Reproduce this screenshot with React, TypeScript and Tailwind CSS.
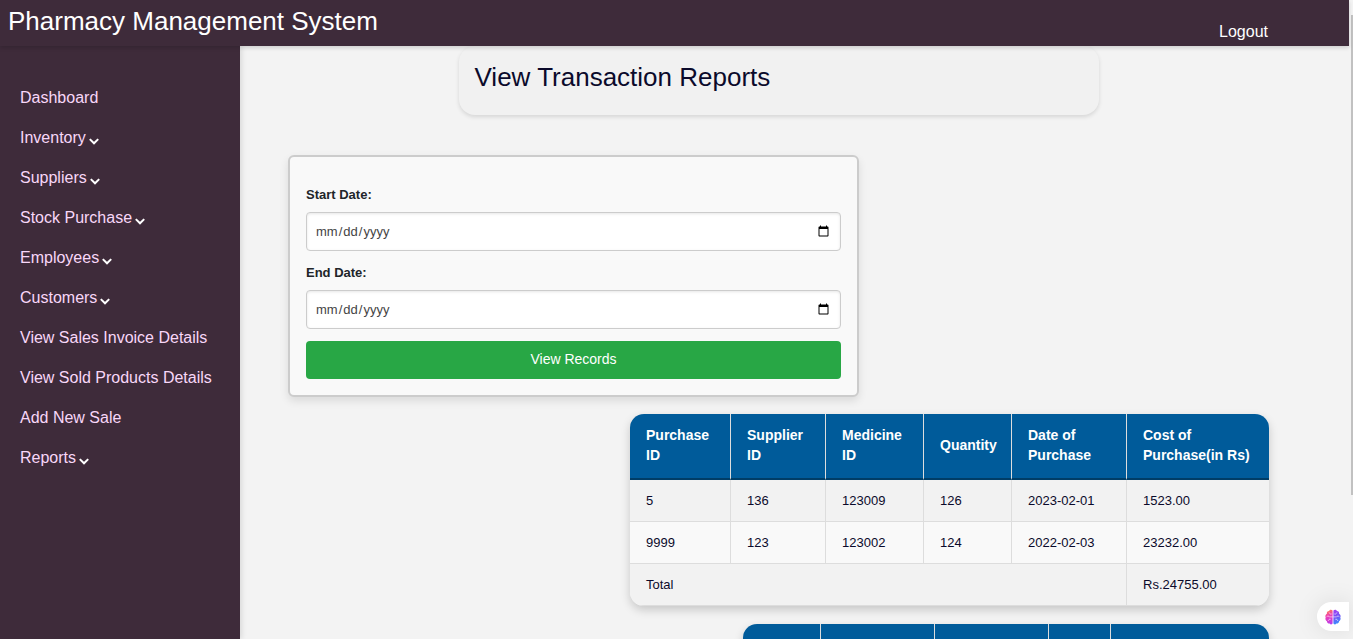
import React from "react";

type NavEntry = { label: string; expandable?: boolean };

const NAV: NavEntry[] = [
  { label: "Dashboard" },
  { label: "Inventory", expandable: true },
  { label: "Suppliers", expandable: true },
  { label: "Stock Purchase", expandable: true },
  { label: "Employees", expandable: true },
  { label: "Customers", expandable: true },
  { label: "View Sales Invoice Details" },
  { label: "View Sold Products Details" },
  { label: "Add New Sale" },
  { label: "Reports", expandable: true },
];

const COLUMNS = [
  { title: "Purchase ID", width: "w-[101px]" },
  { title: "Supplier ID", width: "w-[95px]" },
  { title: "Medicine ID", width: "w-[98px]" },
  { title: "Quantity", width: "w-[88px]" },
  { title: "Date of Purchase", width: "w-[115px]" },
  { title: "Cost of Purchase(in Rs)", width: "w-[142px]" },
];

const ROWS = [
  ["5", "136", "123009", "126", "2023-02-01", "1523.00"],
  ["9999", "123", "123002", "124", "2022-02-03", "23232.00"],
];

const SECOND_TABLE_COLUMNS = ["w-[78px]", "w-[114px]", "w-[114px]", "w-[62px]", "w-[158px]"];

const TH =
  "border-b-2 border-b-[#003d66] border-r border-r-[#dddddd] px-4 pt-[11px] pb-[13px] text-left align-middle font-bold last:border-r-0";
const TD = "border-r border-b border-[#dddddd] px-4 pt-[11px] pb-[10px] last:border-r-0";

function Chevron() {
  return (
    <svg className="mt-1.5 ml-[3px] h-[7px] w-[10px]" viewBox="0 0 10 7" fill="none" aria-hidden="true">
      <path d="M0.8 1.1 L5 5.3 L9.2 1.1" stroke="#ffffff" strokeWidth="2" />
    </svg>
  );
}

function BrainIcon() {
  return (
    <svg className="h-4 w-4" viewBox="0 0 16 16" fill="none" aria-hidden="true">
      <defs>
        <linearGradient id="brainLeft" x1="1" y1="1" x2="7" y2="15" gradientUnits="userSpaceOnUse">
          <stop offset="0" stopColor="#ff8a3c" />
          <stop offset="0.4" stopColor="#ee3fb4" />
          <stop offset="1" stopColor="#b63df0" />
        </linearGradient>
        <linearGradient id="brainRight" x1="9" y1="1" x2="15" y2="15" gradientUnits="userSpaceOnUse">
          <stop offset="0" stopColor="#a63df2" />
          <stop offset="0.5" stopColor="#7256f5" />
          <stop offset="1" stopColor="#2e9bff" />
        </linearGradient>
      </defs>
      <path
        d="M7.6 1.6C6.6 .3 4.6 .6 4.1 2 2.6 2 1.5 3.4 1.9 4.8.4 5.6 0 7.4.7 8.6 0 10 .5 11.6 1.9 12.2c.1 1.5 1.4 2.5 2.7 2.3.8 1.2 2.4 1.2 3 .1Z"
        fill="url(#brainLeft)"
      />
      <path
        d="M8.4 1.6c1-1.3 3-1 3.5.4 1.5 0 2.6 1.4 2.2 2.8 1.5.8 1.9 2.6 1.2 3.8.7 1.4.2 3-1.2 3.6-.1 1.5-1.4 2.5-2.7 2.3-.8 1.2-2.4 1.2-3 .1Z"
        fill="url(#brainRight)"
      />
      <path
        d="M4.3 3.9c.3 1 1.2 1.4 2 1.2M2 7.4c1-.6 2-.3 2.4.5h3M3.3 11.6c.1-1 1-1.6 2-1.4M11.7 3.9c-.3 1-1.2 1.4-2 1.2M14 7.4c-1-.6-2-.3-2.4.5h-3M12.7 11.6c-.1-1-1-1.6-2-1.4"
        stroke="#ffffff"
        strokeOpacity="0.75"
        strokeWidth="0.8"
        strokeLinecap="round"
      />
    </svg>
  );
}

function DateField({ id, label }: { id: string; label: string }) {
  return (
    <div className="mb-3">
      <label htmlFor={id} className="mb-[7px] block text-[13px] leading-5 font-bold text-[#212529]">
        {label}
      </label>
      <input
        id={id}
        type="date"
        className="block h-[39px] w-full rounded-[4px] border border-[#cccccc] bg-white px-2 text-[13px] text-[#444444] shadow-[inset_0_1px_3px_rgba(0,0,0,0.1)]"
      />
    </div>
  );
}

export default function App() {
  return (
    <div className="flex h-screen overflow-hidden bg-[#f3f3f3] font-['Liberation_Sans',Arial,sans-serif] text-[#0b0a2b]">
      <div className="relative flex min-w-0 flex-1 flex-col">
        <header className="z-20 flex h-[46px] shrink-0 justify-between bg-[#3e2b3a] pr-[81px] pl-2 text-white shadow-[0_2px_4px_rgba(0,0,0,0.15)]">
          <h1 className="pt-1 text-[26px] leading-[34px]">Pharmacy Management System</h1>
          <a href="#logout" className="pt-5 text-base leading-6">
            Logout
          </a>
        </header>

        <div className="flex min-h-0 flex-1">
          <nav className="z-10 w-60 shrink-0 bg-[#3e2b3a] pt-8 shadow-[2px_0_5px_rgba(0,0,0,0.1)]">
            <ul>
              {NAV.map((item) => (
                <li key={item.label}>
                  <a href="#" className="flex h-10 items-center pl-5 text-base text-[#f8d7f8]">
                    {item.label}
                    {item.expandable && <Chevron />}
                  </a>
                </li>
              ))}
            </ul>
          </nav>

          <main className="flex min-w-0 flex-1 flex-col overflow-hidden pr-20 pl-12">
            <div className="mx-auto w-full max-w-[640px] shrink-0 rounded-[16px] bg-[#f1f1f1] px-4 pt-[13px] pb-5 shadow-[0_2px_4px_rgba(0,0,0,0.12)]">
              <h2 className="text-[26px] leading-9">View Transaction Reports</h2>
            </div>

            <form className="mt-10 w-full max-w-[571px] shrink-0 rounded-[6px] border-2 border-[#cccccc] bg-[#f9f9f9] px-4 pt-7 pb-4 shadow-[0_4px_8px_rgba(0,0,0,0.1)]">
              <DateField id="start-date" label="Start Date:" />
              <DateField id="end-date" label="End Date:" />
              <button
                type="button"
                className="block h-[38px] w-full rounded-[4px] bg-[#28a745] pb-0.5 text-sm text-white"
              >
                View Records
              </button>
            </form>

            <div className="mt-[17px] w-full max-w-[639px] shrink-0 self-end overflow-hidden rounded-[14px] shadow-[0_4px_10px_rgba(0,0,0,0.18)]">
              <table className="w-full table-fixed border-separate border-spacing-0 text-[13px] leading-5">
                <thead className="bg-[#005b9a] text-sm leading-5 text-white">
                  <tr>
                    {COLUMNS.map((column) => (
                      <th key={column.title} scope="col" className={`${TH} ${column.width}`}>
                        {column.title}
                      </th>
                    ))}
                  </tr>
                </thead>
                <tbody>
                  {ROWS.map((row) => (
                    <tr key={row[0]} className="odd:bg-[#f2f2f2] even:bg-[#f9f9f9]">
                      {row.map((value, index) => (
                        <td key={index} className={TD}>
                          {value}
                        </td>
                      ))}
                    </tr>
                  ))}
                  <tr className="bg-[#f2f2f2]">
                    <td colSpan={5} className={TD}>
                      Total
                    </td>
                    <td className={TD}>Rs.24755.00</td>
                  </tr>
                </tbody>
              </table>
            </div>

            <div className="mt-[18px] w-full max-w-[526px] shrink-0 self-end overflow-hidden rounded-[14px] shadow-[0_4px_10px_rgba(0,0,0,0.18)]">
              <table className="w-full table-fixed border-separate border-spacing-0 text-[13px] leading-5">
                <thead className="bg-[#005b9a] text-white">
                  <tr className="h-[66px]">
                    {SECOND_TABLE_COLUMNS.map((width, index) => (
                      <th key={index} scope="col" className={`${TH} ${width}`} />
                    ))}
                  </tr>
                </thead>
              </table>
            </div>
          </main>
        </div>

        <button
          type="button"
          aria-label="Assistant"
          className="absolute right-0 bottom-2 z-30 flex h-[29px] w-8 items-center rounded-l-full bg-white pl-2 shadow-[0_0_24px_rgba(0,0,0,0.1)]"
        >
          <BrainIcon />
        </button>
      </div>

      <div className="flex w-1 shrink-0 flex-col items-end bg-[#f3f3f3] pt-[15px]" aria-hidden="true">
        <div className="h-[77%] w-0.5 bg-[#c1c1c1]" />
      </div>
    </div>
  );
}
